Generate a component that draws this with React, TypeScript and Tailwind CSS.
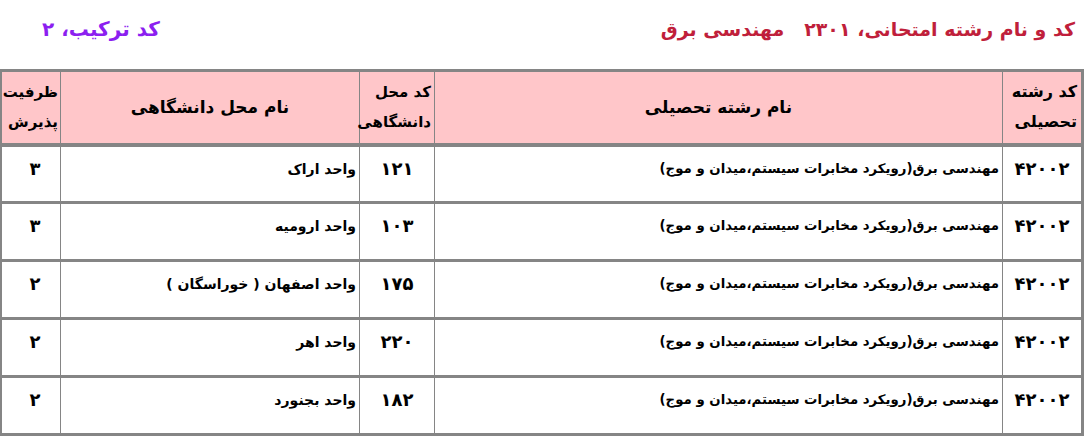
const rows = [
  { code: "۴۲۰۰۲", major: "مهندسی برق(رویکرد مخابرات سیستم،میدان و موج)", placeCode: "۱۲۱", place: "واحد اراک", cap: "۳" },
  { code: "۴۲۰۰۲", major: "مهندسی برق(رویکرد مخابرات سیستم،میدان و موج)", placeCode: "۱۰۳", place: "واحد ارومیه", cap: "۳" },
  { code: "۴۲۰۰۲", major: "مهندسی برق(رویکرد مخابرات سیستم،میدان و موج)", placeCode: "۱۷۵", place: "واحد اصفهان ( خوراسگان )", cap: "۲" },
  { code: "۴۲۰۰۲", major: "مهندسی برق(رویکرد مخابرات سیستم،میدان و موج)", placeCode: "۲۲۰", place: "واحد اهر", cap: "۲" },
  { code: "۴۲۰۰۲", major: "مهندسی برق(رویکرد مخابرات سیستم،میدان و موج)", placeCode: "۱۸۲", place: "واحد بجنورد", cap: "۲" },
];

export default function App() {
  return (
    <div
      dir="rtl"
      className="w-[1087px] h-[438px] overflow-hidden bg-white text-black font-bold font-['DejaVu_Sans',Tahoma,sans-serif]"
    >
      <div className="h-[69px] flex items-start justify-between pt-[14px] pr-[12px] pl-[42px]">
        <h1 className="text-[19px] leading-[30px] text-[#c01f3b]">
          کد و نام رشته امتحانی، ۲۳۰۱&nbsp;&nbsp; مهندسی برق
        </h1>
        <h2 className="text-[20px] leading-[30px] text-[#8c1ff0]">کد ترکیب، ۲</h2>
      </div>

      <table className="mr-[3px] w-[1082px] table-fixed border-collapse border-[3px] border-[#858585]">
        <colgroup>
          <col className="w-[80px]" />
          <col className="w-[568px]" />
          <col className="w-[75px]" />
          <col className="w-[299px]" />
          <col className="w-[60px]" />
        </colgroup>
        <thead>
          <tr className="h-[74px] bg-[#ffc6c9] border-b-[4px] border-[#858585] text-[16px] leading-[30px]">
            <th className="border-l border-[#858585] text-right align-middle pr-[4px] font-bold">
              کد رشته
              <br />
              تحصیلی
            </th>
            <th className="border-l border-[#858585] text-center align-middle text-[17px] font-bold">نام رشته تحصیلی</th>
            <th className="border-l border-[#858585] text-right align-middle pr-[3px] text-[15px] font-bold">
              کد محل
              <br />
              دانشگاهی
            </th>
            <th className="border-l border-[#858585] text-center align-middle text-[17px] font-bold">نام محل دانشگاهی</th>
            <th className="text-right align-middle pr-[2px] text-[15px] font-bold">
              ظرفیت
              <br />
              پذیرش
            </th>
          </tr>
        </thead>
        <tbody>
          {rows.map((r, i) => (
            <tr key={i} className="h-[58px] border-b-[3px] border-[#858585]">
              <td className="border-l border-[#858585] align-top text-center pt-[10px] text-[18px] leading-[24px]">
                {r.code}
              </td>
              <td className="border-l border-[#858585] align-top text-right pt-[12px] pr-[3px] text-[13.3px] leading-[20px]">
                {r.major}
              </td>
              <td className="border-l border-[#858585] align-top text-center pt-[10px] text-[18px] leading-[24px]">
                {r.placeCode}
              </td>
              <td className="border-l border-[#858585] align-top text-right pt-[12px] pr-[3px] text-[14px] leading-[20px]">
                {r.place}
              </td>
              <td className="align-top text-center pt-[10px] pl-[8px] text-[18px] leading-[24px]">{r.cap}</td>
            </tr>
          ))}
        </tbody>
      </table>
    </div>
  );
}
